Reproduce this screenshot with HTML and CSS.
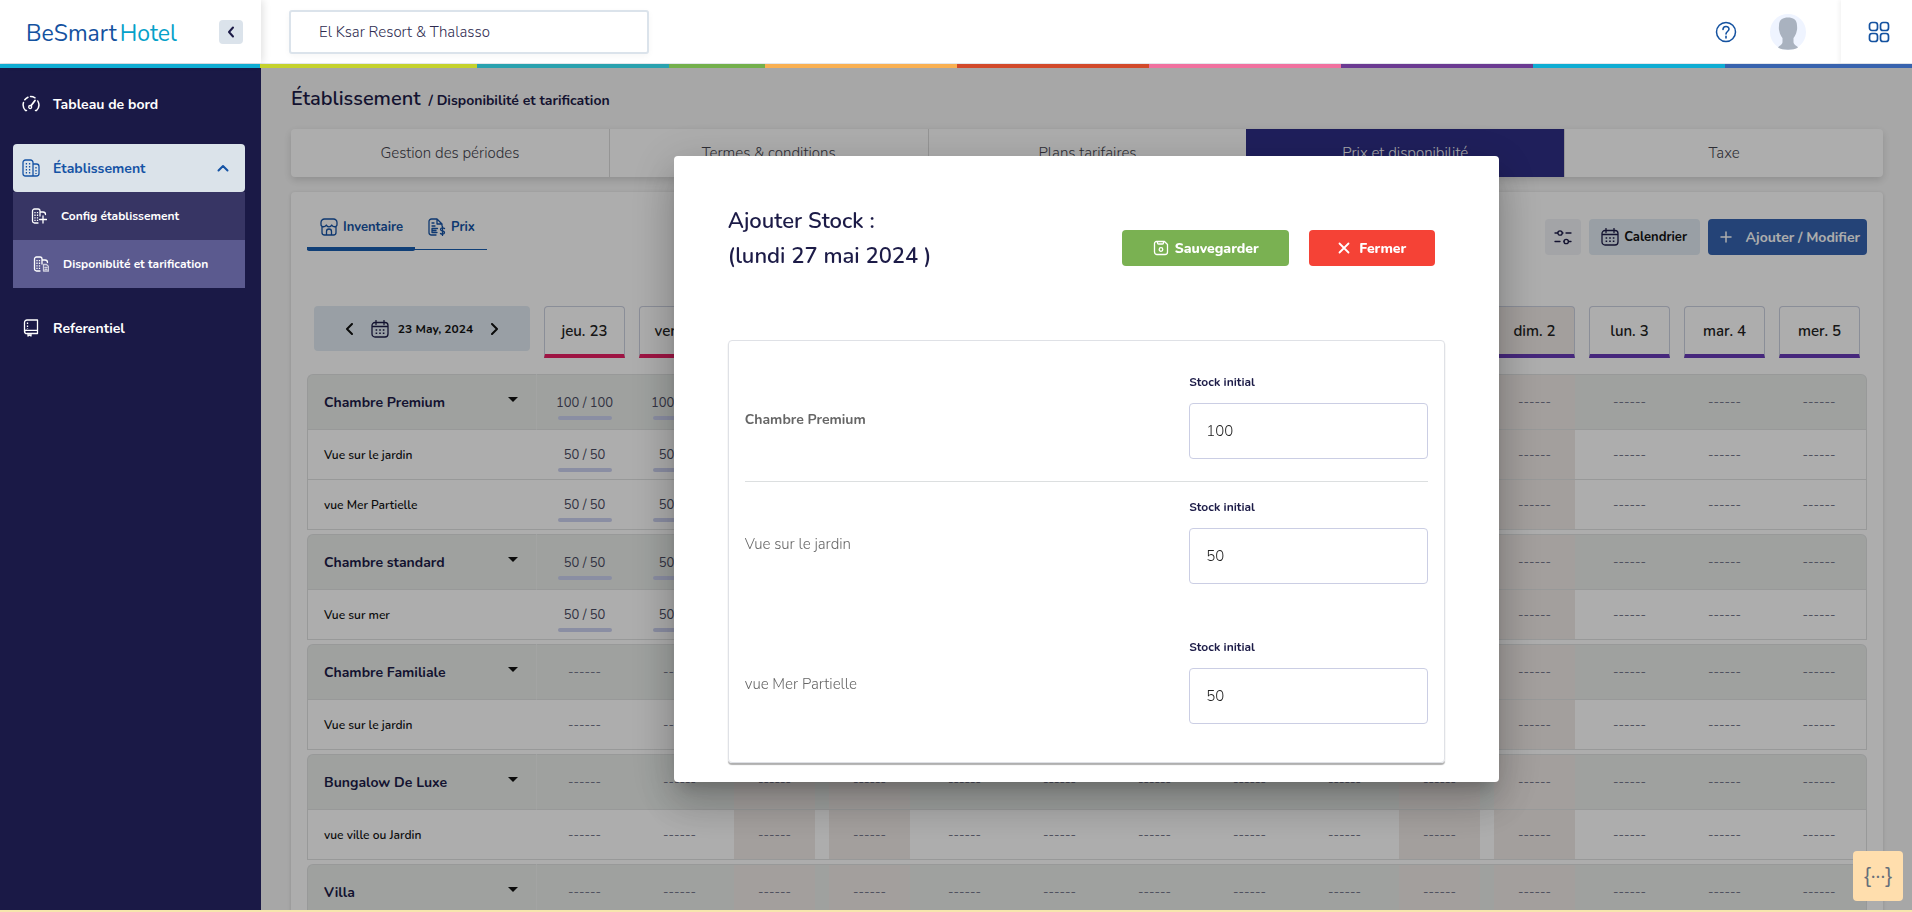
FILE: index.html
```html
<!DOCTYPE html>
<html lang="fr">
<head>
<meta charset="utf-8">
<meta name="viewport" content="width=device-width, initial-scale=1">
<title>BeSmart Hotel</title>
<link rel="stylesheet" href="styles.css">
</head>
<body>
<svg class="defs" aria-hidden="true">
  <symbol id="i-calendar" viewBox="0 0 18 18"><path d="M4 2.500h10A3 3 0 0 1 17 5.500v8.500a3 3 0 0 1-3 3H4a3 3 0 0 1-3-3V5.500a3 3 0 0 1 3-3zM1 6.500h16M5 .5v4M13 .5v4"/><path stroke-dasharray="1.600 2" d="M4.600 10h9M4.600 13.300h9" stroke-width="1.600"/></symbol>
  <symbol id="i-building" viewBox="0 0 18 18"><path d="M3.500 1h5A2.500 2.500 0 0 1 11 3.500V17H3.500A2.500 2.500 0 0 1 1 14.500v-11A2.500 2.500 0 0 1 3.500 1zM11 5h3.500A2.500 2.500 0 0 1 17 7.500v7a2.500 2.500 0 0 1-2.500 2.500H11"/><path stroke-dasharray="1.500 1.500" d="M4.400 4v11M7.600 4v11M14 8v7"/></symbol>
</svg>

<header class="topbar">
  <div class="topbar-row">
    <div class="brand">
      <a class="logo" href="#">BeSmart<span>Hotel</span></a>
      <button class="collapse" aria-label="Réduire le menu"><svg width="8" height="12" viewBox="0 0 8 12"><path d="M6 1.500 2 6l4 4.500" stroke-width="2"/></svg></button>
    </div>
    <div class="topbar-main">
      <input class="hotel" aria-label="Hôtel" value="El Ksar Resort &amp; Thalasso">
      <div class="tools">
        <button class="plain" aria-label="Aide"><svg width="22" height="22" viewBox="0 0 22 22"><circle cx="11" cy="11" r="9.500"/><path d="M8 8.500c0-4 6-4 6-.5 0 2.500-3 2.500-3 5M11 15.200v1.800" stroke-width="1.600"/></svg></button>
        <button class="plain avatar" aria-label="Profil"><svg width="36" height="36" viewBox="0 0 36 36"><circle cx="18" cy="18" r="18" fill="#eff4ff" stroke="none"/><path d="M18 3.500c5 0 9 2 9 8 0 1 .5 3-.3 5.500-.5 3-2 5.500-3.200 7v4c0 3 3.500 3.500 4.500 5.500-4 3-16 3-20 0 1-2 4.500-2.500 4.500-5.500v-4c-1.200-1.500-2.700-4-3.200-7C8.500 14.500 9 12.500 9 11.500c0-6 4-8 9-8z" fill="#a9b2bf" stroke="none"/></svg></button>
      </div>
      <button class="plain apps" aria-label="Applications"><svg width="22" height="22" viewBox="0 0 22 22"><rect x="1.500" y="1.500" width="8" height="8" rx="2.500"/><rect x="12.500" y="1.500" width="8" height="8" rx="2.500"/><rect x="1.500" y="12.500" width="8" height="8" rx="2.500"/><rect x="12.500" y="12.500" width="8" height="8" rx="2.500"/></svg></button>
    </div>
  </div>
  <div class="stripes"><i></i><i></i><i></i><i></i><i></i><i></i><i></i><i></i><i></i><i></i></div>
</header>

<div class="shell">
  <nav class="sidebar">
    <a class="nav-item" href="#"><svg width="18" height="18" viewBox="0 0 18 18"><path d="M4.500 15.500H3.500A8 8 0 0 1 1.500 7.500M2.800 4.800A8 8 0 0 1 6 2.200M8.500 1.500a8 8 0 0 1 4.500 1.300M15.800 6a8 8 0 0 1-1.300 9.500H13.500" stroke-width="1.500"/><path d="M9.200 10.500 13 5.500" stroke-width="1.800"/><circle cx="8.200" cy="12" r="1.500"/></svg>Tableau de bord</a>
    <div class="nav-group">
      <a class="nav-item open" href="#"><svg width="18" height="18"><use href="#i-building"/></svg>Établissement<svg class="chev" width="12" height="8" viewBox="0 0 12 8"><path d="M1.500 6.500 6 2l4.500 4.500" stroke-width="2"/></svg></a>
      <a class="nav-sub" href="#"><svg width="16" height="16" viewBox="0 0 16 16"><path d="M7 15H3.500A2 2 0 0 1 1.500 13V3a2 2 0 0 1 2-2H7a2 2 0 0 1 2 2v5M9 4h3a2.500 2.500 0 0 1 2.500 2.500M12 8v7M8.500 11.500h7"/><path stroke-dasharray="1.300 1.300" d="M4 4v9M6.500 4v9"/></svg>Config établissement</a>
      <a class="nav-sub current" href="#"><svg width="16" height="16" viewBox="0 0 16 16"><path d="M7 15H3.500A2 2 0 0 1 1.500 13V3a2 2 0 0 1 2-2H7a2 2 0 0 1 2 2v5M9 4h3a2.500 2.500 0 0 1 2.500 2.500"/><path opacity=".7" d="M10.500 8.500h3l2 2V15h-5zM12 11.500h2M12 13.300h2"/><path stroke-dasharray="1.300 1.300" d="M4 4v9M6.500 4v9"/></svg>Disponiblité et tarification</a>
    </div>
    <a class="nav-item" href="#"><svg width="18" height="18" viewBox="0 0 18 18"><path d="M2.500 12.500v-9A2.500 2.500 0 0 1 5 1h10.500v13.500H5a2 2 0 0 1-2.500-2 2 2 0 0 1 2.500-1.100h10.500M6 14.500v2.500l1.500-1 1.500 1v-2.500"/><path stroke-dasharray="1.500 1.500" d="M5.500 3.500V10"/></svg>Referentiel</a>
  </nav>

  <main class="main">
    <h1 class="title">Établissement <small>/ Disponibilité et tarification</small></h1>
    <div class="steps">
      <a href="#">Gestion des périodes</a><a href="#">Termes &amp; conditions</a><a href="#">Plans tarifaires</a><a class="on" href="#">Prix et disponibilité</a><a href="#">Taxe</a>
    </div>
    <section class="card">
      <div class="card-top">
        <div class="views">
          <a class="on" href="#"><svg width="18" height="18" viewBox="0 0 18 18"><path d="M2 8.500v6A2.500 2.500 0 0 0 4.500 17h9a2.500 2.500 0 0 0 2.500-2.500v-6M6.500 17v-3.500a2.500 2.500 0 0 1 5 0V17M4.500 1h9a3.500 3.500 0 0 1 3.500 3.500v2c0 2.800-4.200 3-5.300.5-1 2.500-4.400 2.500-5.400 0C5.200 9.500 1 9.300 1 6.500v-2A3.500 3.500 0 0 1 4.500 1z"/></svg>Inventaire</a>
          <a href="#"><svg width="18" height="18" viewBox="0 0 18 18"><path d="M8 17H3.500A2.500 2.500 0 0 1 1 14.500v-11A2.500 2.500 0 0 1 3.500 1H9l5 5v2M9 1v5h5M4 5h2M4 8h3M9.500 10.500H4v4h5M4 12.500h4M16.500 10.500c-1-1-4-1-4 1s4 1 4 3-3 2-4 1M14.500 8.500v9"/></svg>Prix</a>
        </div>
        <div class="actions">
          <button class="btn filter" aria-label="Filtrer"><svg width="18" height="18" viewBox="0 0 18 18"><path d="M1 5h3M8.500 5H9M12 5h5M1 13.500h5M10 13.500h0M14.500 13.500H17"/><circle cx="6" cy="5" r="2.200"/><circle cx="12.200" cy="13.500" r="2.200"/></svg></button>
          <button class="btn cal"><svg width="18" height="18"><use href="#i-calendar"/></svg>Calendrier</button>
          <button class="btn add"><svg width="12" height="12" viewBox="0 0 12 12"><path d="M6 1v10M1 6h10" stroke-width="1.500"/></svg>Ajouter / Modifier</button>
        </div>
      </div>
      <table class="stock">
        <colgroup><col class="col-name"></colgroup>
        <thead>
          <tr id="days">
            <th><div class="date-nav">
              <button class="plain" aria-label="Précédent"><svg width="8" height="12" viewBox="0 0 8 12"><path d="M7 1 2 6l5 5" stroke-width="2"/></svg></button>
              <span class="date"><svg width="18" height="18"><use href="#i-calendar"/></svg>23 May, 2024</span>
              <button class="plain" aria-label="Suivant"><svg width="8" height="12" viewBox="0 0 8 12"><path d="M1 1l5 5-5 5" stroke-width="2"/></svg></button>
            </div></th>
          </tr>
        </thead>
      </table>
    </section>
  </main>
</div>

<div class="overlay">
  <form class="dialog" role="dialog" aria-labelledby="dlg-title">
    <div class="dialog-head">
      <h2 id="dlg-title">Ajouter Stock :<br>(lundi 27 mai 2024 )</h2>
      <div class="dialog-actions">
        <button type="button" class="btn save"><svg width="16" height="16" viewBox="0 0 16 16"><path d="M3.500 1.500h8l3 3v7.500a2.500 2.500 0 0 1-2.500 2.500H4A2.500 2.500 0 0 1 1.500 12V3.500a2 2 0 0 1 2-2zM4.500 1.500v1.500a1 1 0 0 0 1 1h4a1 1 0 0 0 1-1V1.500"/><circle cx="8" cy="9.500" r="1.800"/></svg>Sauvegarder</button>
        <button type="button" class="btn close"><svg width="12" height="12" viewBox="0 0 12 12"><path d="m1.500 1.500 9 9M10.500 1.500l-9 9" stroke-width="1.800"/></svg>Fermer</button>
      </div>
    </div>
    <div class="panel">
      <div class="field parent"><span class="label">Chambre Premium</span><div class="qty"><label for="q1">Stock initial</label><input id="q1" value="100"></div></div>
      <div class="field"><span class="label">Vue sur le jardin</span><div class="qty"><label for="q2">Stock initial</label><input id="q2" value="50"></div></div>
      <div class="field"><span class="label">vue Mer Partielle</span><div class="qty"><label for="q3">Stock initial</label><input id="q3" value="50"></div></div>
    </div>
  </form>
</div>

<button class="dev" aria-label="Outils">{···}</button>
<div class="base-line"></div>
<script src="app.js"></script>
</body>
</html>
```

FILE: styles.css
```css
* { box-sizing: border-box; }
body {
  margin: 0;
  height: 100vh;
  overflow: hidden;
  display: flex;
  flex-direction: column;
  background: #f7f7f7;
  color: #1c1b47;
  font-family: Nunito, Lato, "Noto Sans", sans-serif;
  font-size: 15px;
}
a { color: inherit; text-decoration: none; }
button, input { font: inherit; color: inherit; }
button { border: 0; padding: 0; background: none; }
svg { fill: none; stroke: currentColor; stroke-width: 1.3; stroke-linecap: round; stroke-linejoin: round; flex: none; display: block; }
svg [stroke-dasharray] { stroke-linecap: butt; }
.defs { position: absolute; width: 0; height: 0; }

/* Top bar */
.topbar { background: #fff; flex: none; position: relative; }
.topbar-row { display: flex; height: 64px; border-bottom: 1px solid #e4e7ec; }
.brand {
  width: 261px; flex: none; display: flex; align-items: center; justify-content: space-between;
  padding: 0 18px 10px 26px; box-shadow: 2px 0 8px #0000001f;
}
.logo { font-size: 23px; line-height: 32px; color: #1452a0; padding-top: 15px; }
.logo span { color: #05a1c9; margin-left: 3px; }
.collapse { width: 24px; height: 24px; border-radius: 4px; background: #dbe3eb; display: grid; place-items: center; margin-top: 10px; }
.topbar-main { flex: 1; display: flex; align-items: center; }
.hotel {
  width: 360px; height: 44px; margin-left: 28px; padding: 0 28px;
  border: 2px solid #dbe3eb; border-radius: 3px; color: #2e2b50; background: #fff;
  box-shadow: 0 2px 6px #0000000a; font-weight: 300;
}
.tools { margin-left: auto; display: flex; align-items: center; gap: 33px; padding-right: 35px; color: #1452a0; }
.tools svg { stroke-width: 1.5; }
.avatar svg { stroke: none; }
.apps { width: 71px; align-self: stretch; display: grid; place-items: center; color: #1452a0; box-shadow: -2px 0 4px #0000000d; padding-left: 4px; }
.apps svg { stroke-width: 1.7; }
.stripes { display: flex; height: 4px; }
.stripes i { flex: 192; background: #0fadd3; }
.stripes i:nth-child(1) { flex: 260; }
.stripes i:nth-child(2) { flex: 217; background: #c5d22d; }
.stripes i:nth-child(3) { background: #2aa2af; }
.stripes i:nth-child(4) { flex: 96; background: #74b04c; }
.stripes i:nth-child(5) { background: #f9b052; }
.stripes i:nth-child(6) { background: #d24a2b; }
.stripes i:nth-child(7) { background: #f0719f; }
.stripes i:nth-child(8) { background: #6b3a91; }
.stripes i:nth-child(10) { flex: 187; background: #3863ae; }

/* Sidebar */
.shell { flex: 1; display: flex; min-height: 0; }
.sidebar { width: 261px; flex: none; background: #1a1946; color: #fff; padding: 12px 16px 0 13px; }
.nav-item { display: flex; align-items: center; gap: 13px; height: 48px; padding: 0 16px 0 9px; font-size: 14px; font-weight: 700; }
.nav-group { margin: 16px 0; }
.nav-item.open { background: #dbe3ea; color: #1553a5; border-radius: 4px; }
.chev { margin-left: auto; }
.nav-sub { display: flex; align-items: center; gap: 14px; height: 48px; padding-left: 18px; background: #373564; font-size: 12px; font-weight: 700; }
.nav-sub.current { background: #5b5a8f; padding-left: 20px; }

/* Page */
.main { flex: 1; min-width: 0; padding: 13px 29px 0 30px; overflow: hidden; }
.title { margin: 0; font-size: 20px; line-height: 36px; font-weight: 600; display: flex; align-items: baseline; gap: 8px; height: 36px; }
.title small { font-size: 14px; font-weight: 700; }
.steps { display: flex; height: 48px; margin: 12px 0 15px; background: #fff; border-radius: 4px; box-shadow: 0 3px 8px #00000026; }
.steps a { flex: 1; display: grid; place-items: center; color: #44444e; font-size: 15px; font-weight: 300; border-left: 1px solid #dcdcdc; }
.steps a:first-child { border-left: 0; }
.steps .on { background: #2e2e87; color: #fff; border: 0; }
.card { background: #fff; border-radius: 4px; padding: 25px 16px 40px; box-shadow: 0 1px 4px #00000026; }
.card-top { display: flex; justify-content: space-between; align-items: flex-start; height: 89px; }
.views { display: flex; color: #1553a5; font-weight: 600; border-bottom: 1px solid #185db0; height: 33px; }
.views a { display: flex; gap: 5px; height: 34px; padding: 0 12px 14px 13px; align-items: center; font-size: 13px; font-weight: 700; }
.views .on { border-bottom: 4px solid #185db0; border-radius: 2px; padding-bottom: 10px; }
.actions { display: flex; gap: 8px; padding-top: 2px; }
.btn { display: flex; align-items: center; justify-content: center; height: 36px; border-radius: 4px; font-weight: 600; }
.filter { width: 36px; background: #f0f2f6; }
.cal { width: 111px; background: #e2ebf3; gap: 5px; font-size: 13px; font-weight: 700; color: #111; }
.cal svg, .date svg { color: #1c1b47; }
.add { background: #3664b0; color: #fff; gap: 14px; padding: 0 7px 0 12px; font-size: 14px; font-weight: 700; }

/* Stock table */
.stock { width: 100%; border-collapse: separate; border-spacing: 0; table-layout: fixed; }
.col-name { width: 230px; }
.stock th, .stock td { padding: 0 7px; text-align: center; }
.stock thead th { height: 68px; vertical-align: top; font-weight: 600; }
.date-nav { height: 45px; border-radius: 4px; background: #e2ebf3; display: flex; align-items: center; justify-content: center; gap: 18px; font-size: 12px; font-weight: 700; color: #111; }
.date { display: flex; align-items: center; gap: 9px; }
.day { height: 52px; border: 1px solid #ccd1e0; border-bottom: 4px solid #e91e63; border-radius: 4px 4px 0 0; display: grid; place-items: center; color: #222; font-size: 15px; }
.june { border-bottom-color: #673ab7; }
.day.weekend { background: #f1ebe8; }
.stock .cell { height: 50px; border-bottom: 1px solid #e0e2e2; color: #77788c; font-size: 13px; vertical-align: middle; padding: 0 7px; }
.stock .cell:last-child { border-right: 1px solid #e0e2e2; }
.stock .name { height: 50px; border: 1px solid #e0e2e2; border-width: 0 0 1px 1px; padding-left: 16px; text-align: left; font-size: 12px; font-weight: 600; color: #111; }
.head .name, .head .cell { height: 56px; background: #eaeeeb; border-top: 1px solid #e0e2e2; }
.stock .head .name { font-size: 14px; font-weight: 700; color: #1c1b47; border-radius: 6px 0 0; border-right: 1px solid #f0f2f1; }
.head .name div { display: flex; justify-content: space-between; align-items: center; padding-right: 11px; }
.caret { border: 5px solid transparent; border-top-color: #111; border-bottom: 0; margin-bottom: 6px; }
.stock .head .cell:last-child { border-radius: 0 6px 0 0; }
.box { display: flex; flex-direction: column; justify-content: center; align-items: center; height: 100%; }
.box.full { padding-top: 9px; gap: 4px; color: #4a4b62; }
.box.weekend { background: #f1ebe8; }
.bar { width: 54px; height: 4px; border-radius: 2px; background: #ccd1f0; }
.gap td { height: 4px; }

/* Dialog */
.overlay { position: fixed; inset: 68px 0 0 261px; background: #00000052; display: flex; justify-content: center; align-items: flex-start; padding-top: 88px; }
.dialog {
  width: 50%; background: #fff; border-radius: 4px; padding: 48px 54px 19px;
  box-shadow: 0 11px 15px -7px #00000033, 0 24px 38px 3px #00000024, 0 9px 46px 8px #0000001f;
}
.dialog-head { display: flex; justify-content: space-between; align-items: flex-start; padding-right: 10px; margin-bottom: 66px; }
.dialog h2 { margin: 0; font-size: 22px; line-height: 35px; font-weight: 600; }
.dialog-actions { display: flex; gap: 20px; margin-top: 26px; color: #fff; }
.dialog .btn { font-weight: 800; font-size: 14px; }
.save { width: 167px; background: #7ab152; gap: 6px; }
.close { width: 126px; background: #f54236; gap: 9px; }
.panel { border: 1px solid #dfe1e6; border-radius: 4px; padding: 32px 16px 38px; box-shadow: 0 2px 1px #00000050; display: grid; }
.field { display: flex; align-items: center; justify-content: space-between; padding-bottom: 54px; font-weight: 300; color: #666; }
.field:last-child { padding-bottom: 0; }
.field.parent { padding-bottom: 22px; margin-bottom: 16px; border-bottom: 1px solid #dcdfe0; }
.label { padding-top: 6px; }
.parent .label { font-size: 14px; font-weight: 700; }
.qty { width: 239px; display: grid; gap: 12px; }
.qty label { color: #1c1b47; font-size: 12px; font-weight: 700; line-height: 18px; }
.qty input { width: 100%; height: 56px; border: 1px solid #cbcee4; border-radius: 4px; padding: 0 16px; color: #222; background: #fff; }

.dev { position: fixed; right: 9px; bottom: 11px; width: 50px; height: 50px; border-radius: 4px; background: #ffdead; color: #666f7a; font-size: 21px; }
.base-line { position: fixed; inset: auto 0 0; height: 2px; background: #f6e6ad; }
```

FILE: app.js
```js
const days = ["jeu. 23", "ven. 24", "sam. 25", "dim. 26", "lun. 27", "mar. 28", "mer. 29", "jeu. 30", "ven. 31", "sam. 1", "dim. 2", "lun. 3", "mar. 4", "mer. 5"];
const isWeekend = d => /^(sam|dim)/.test(d);
const rooms = [
  { name: "Chambre Premium", stock: "100 / 100", views: ["Vue sur le jardin", "vue Mer Partielle"] },
  { name: "Chambre standard", stock: "50 / 50", views: ["Vue sur mer"] },
  { name: "Chambre Familiale", views: ["Vue sur le jardin"] },
  { name: "Bungalow De Luxe", views: ["vue ville ou Jardin"] },
  { name: "Villa", views: [] }
];

document.getElementById("days").insertAdjacentHTML("beforeend", days.map((d, i) =>
  `<th scope="col"><div class="day ${i > 8 ? "june" : ""} ${isWeekend(d) ? "weekend" : ""}">${d}</div></th>`).join(""));

const cells = stock => days.map((d, i) => {
  const weekend = isWeekend(d) ? "weekend" : "";
  const filled = stock && i < 9;
  return `<td class="cell"><div class="box ${weekend} ${filled ? "full" : ""}">${filled ? `<span>${stock}</span><span class="bar"></span>` : "------"}</div></td>`;
}).join("");

document.querySelector(".stock").insertAdjacentHTML("beforeend", rooms.map(r => `<tbody>
  <tr class="head"><th class="name" scope="row"><div>${r.name}<span class="caret"></span></div></th>${cells(r.stock)}</tr>
  ${r.views.map(v => `<tr><th class="name" scope="row">${v}</th>${cells(r.stock && "50 / 50")}</tr>`).join("")}
  <tr class="gap"><td></td></tr></tbody>`).join(""));
```
